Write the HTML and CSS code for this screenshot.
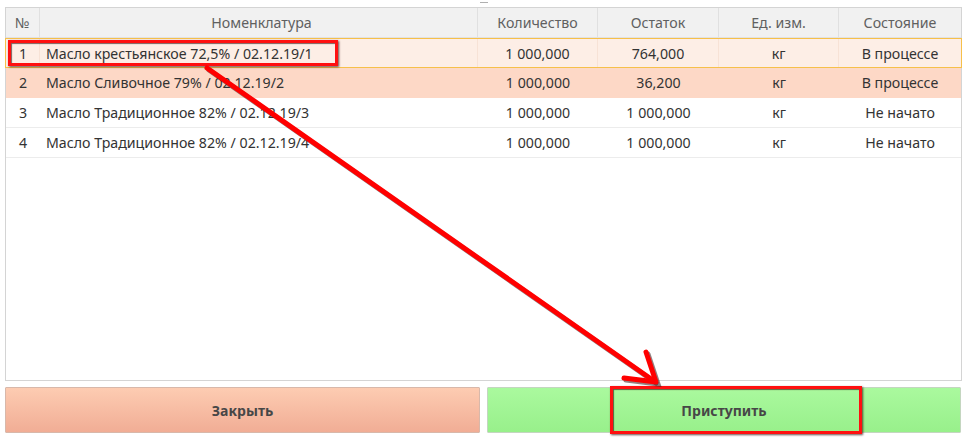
FILE: index.html
```html
<!DOCTYPE html>
<html lang="ru">
<head>
<meta charset="utf-8">
<link rel="stylesheet" href="styles.css">
</head>
<body>
<div class="page">
  <div class="grip-top"></div>
  <div class="table">
    <div class="row head">
      <div class="c num">№</div>
      <div class="c name center">Номенклатура</div>
      <div class="c">Количество</div>
      <div class="c">Остаток</div>
      <div class="c">Ед. изм.</div>
      <div class="c">Состояние</div>
    </div>
    <div class="row sel">
      <div class="c num">1</div>
      <div class="c name">Масло крестьянское 72,5% / 02.12.19/1</div>
      <div class="c">1 000,000</div>
      <div class="c">764,000</div>
      <div class="c">кг</div>
      <div class="c">В процессе</div>
    </div>
    <div class="row busy">
      <div class="c num">2</div>
      <div class="c name">Масло Сливочное 79% / 02.12.19/2</div>
      <div class="c">1 000,000</div>
      <div class="c">36,200</div>
      <div class="c">кг</div>
      <div class="c">В процессе</div>
    </div>
    <div class="row">
      <div class="c num">3</div>
      <div class="c name">Масло Традиционное 82% / 02.12.19/3</div>
      <div class="c">1 000,000</div>
      <div class="c">1 000,000</div>
      <div class="c">кг</div>
      <div class="c">Не начато</div>
    </div>
    <div class="row">
      <div class="c num">4</div>
      <div class="c name">Масло Традиционное 82% / 02.12.19/4</div>
      <div class="c">1 000,000</div>
      <div class="c">1 000,000</div>
      <div class="c">кг</div>
      <div class="c">Не начато</div>
    </div>
  </div>
  <div class="buttons">
    <button class="btn close">Закрыть</button>
    <button class="btn start">Приступить</button>
  </div>
  <div class="mark mark-row"></div>
  <div class="mark mark-btn"></div>
  <svg class="arrow" width="964" height="439" viewBox="0 0 964 439">
    <g transform="translate(2,2)" stroke="#3a1a1a" stroke-opacity="0.55" stroke-width="5" stroke-linecap="round" fill="none">
      <line x1="207" y1="68" x2="654" y2="381"/>
      <polyline points="624,378 656,382 646,352"/>
    </g>
    <g stroke="#ff0000" stroke-width="5" stroke-linecap="round" stroke-linejoin="round" fill="none">
      <line x1="207" y1="68" x2="654" y2="381"/>
      <polyline points="624,378 656,382 646,352"/>
    </g>
  </svg>
</div>
</body>
</html>
```
FILE: styles.css
```css
* { box-sizing: border-box; }
html, body { margin: 0; padding: 0; background: #fff; }
body {
  font-family: "Noto Sans", "Open Sans", "Liberation Sans", sans-serif;
  font-size: 14.2px;
  color: #333;
}
.page {
  position: relative;
  width: 964px;
  height: 439px;
  padding: 7px 2px 0 5px;
}
.grip-top {
  position: absolute;
  left: 480px;
  top: 2px;
  width: 8px;
  height: 1px;
  background: #b0b0b0;
}
.table {
  width: 957px;
  height: 374px;
  border: 1px solid #d4d4d4;
  background: #fff;
}
.row {
  display: grid;
  grid-template-columns: 34px 438px 120px 121px 120px 122px;
  height: 30px;
  border-bottom: 1px solid #ececec;
}
.row .c {
  display: flex;
  align-items: center;
  justify-content: center;
  white-space: nowrap;
  overflow: hidden;
}
.row .num { justify-content: flex-start; padding-left: 13px; }
.row .name { justify-content: flex-start; padding-left: 6px; }
.row .name.center { justify-content: center; }
.head { background: #f1f1f1; color: #606060; border-bottom: 1px solid #e2e2e2; height: 30px; }
.head .c { border-right: 1px solid #e0e0e0; }
.head .c:last-child { border-right: none; }
.head .num { padding-left: 9px; }
.sel {
  background: #fdeee6;
  border: 1px solid #f6c04a;
  margin: 0 -1px;
  height: 30px;
}
.sel .c { border-right: 1px solid #f7e2d6; }
.sel .c:last-child { border-right: none; }
.busy { background: #fdd8c6; border-bottom-color: #fdd8c6; }
.buttons {
  display: grid;
  grid-template-columns: 475px 474px;
  gap: 7px;
  margin-top: 6px;
  height: 46px;
}
.btn {
  font-family: "Noto Sans", "Open Sans", "Liberation Sans", sans-serif;
  font-size: 14px;
  font-weight: bold;
  color: #474747;
  border: 1px solid #c9c9c9;
  border-radius: 1px;
  cursor: pointer;
}
.close { background: linear-gradient(#fdccb2, #f1ad95); border-color: #d8b8aa; }
.start { background: linear-gradient(#aaf99e, #98f08b); border-color: #c4d6c0; }
.mark {
  position: absolute;
  border: 3px solid #ff1010;
  box-shadow: 1px 1px 2px rgba(40, 0, 0, 0.7), inset 1px 1px 1px rgba(40, 0, 0, 0.6);
}
.mark-row { left: 8px; top: 40px; width: 330px; height: 26px; }
.mark-btn { left: 610px; top: 386px; width: 252px; height: 48px; }
.arrow { position: absolute; left: 0; top: 0; pointer-events: none; }
```
